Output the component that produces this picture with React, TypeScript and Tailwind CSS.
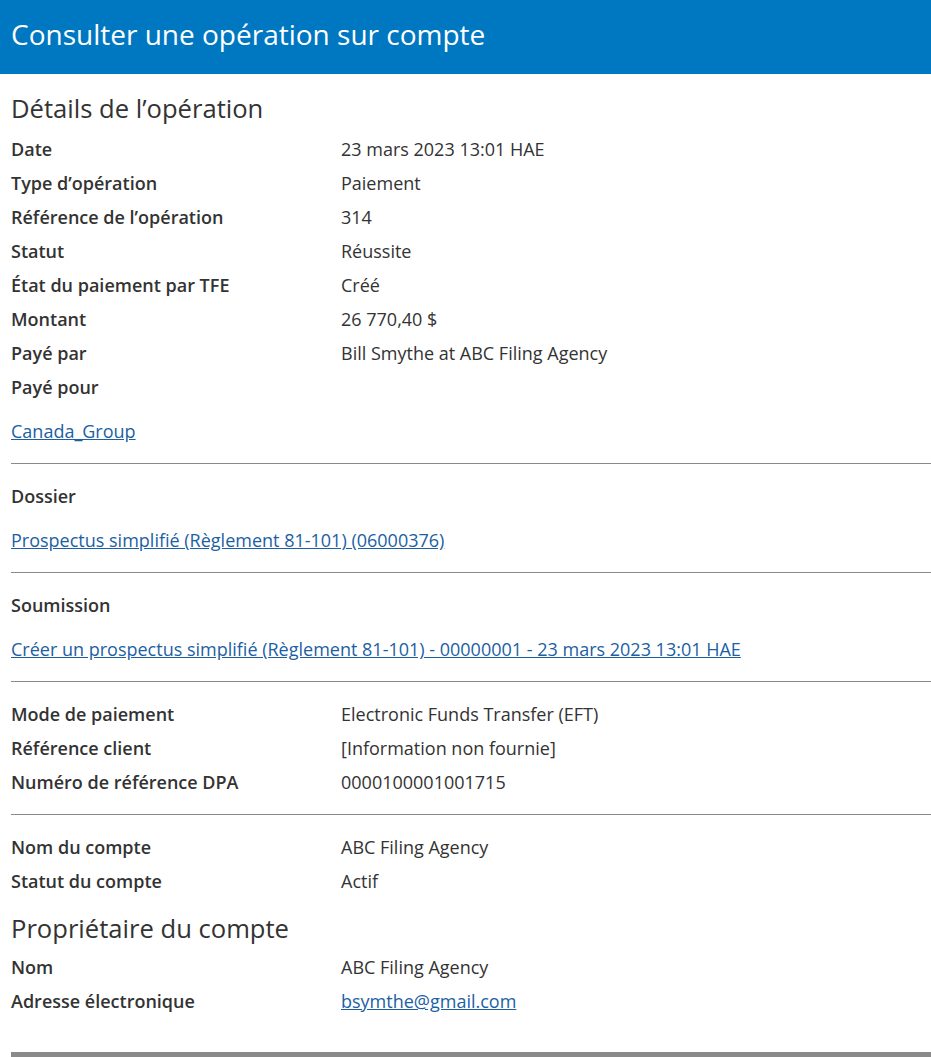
const font = { fontFamily: '"Open Sans", "Noto Sans", sans-serif' };

type Row = { label: string; value?: string; href?: boolean };

function Rows({ rows }: { rows: Row[] }) {
  return (
    <dl>
      {rows.map((r) => (
        <div key={r.label} className="flex py-[5px] leading-6">
          <dt className="w-[330px] shrink-0 font-semibold">{r.label}</dt>
          <dd>
            {r.href ? (
              <a href="#" className="text-[#1c5fa3] underline">
                {r.value}
              </a>
            ) : (
              r.value
            )}
          </dd>
        </div>
      ))}
    </dl>
  );
}

function LinkLine({ children }: { children: React.ReactNode }) {
  return (
    <p className="mt-[10px] py-[5px] leading-6">
      <a href="#" className="text-[#1c5fa3] underline">
        {children}
      </a>
    </p>
  );
}

function Rule() {
  return <hr className="my-[15px] border-0 border-t border-[#8a8a8a]" />;
}

export default function App() {
  return (
    <div className="min-h-screen bg-white text-[18px] text-[#333333]" style={font}>
      <header className="flex h-[74px] items-center bg-[#0077c1] px-[11px] pb-[6px]">
        <h1 className="text-[28px] leading-9 text-white">
          Consulter une opération sur compte
        </h1>
      </header>

      <main className="pl-[11px]">
        <h2 className="mt-[19px] mb-[7px] text-[25.6px] leading-8">Détails de l’opération</h2>
        <Rows
          rows={[
            { label: "Date", value: "23 mars 2023 13:01 HAE" },
            { label: "Type d’opération", value: "Paiement" },
            { label: "Référence de l’opération", value: "314" },
            { label: "Statut", value: "Réussite" },
            { label: "État du paiement par TFE", value: "Créé" },
            { label: "Montant", value: "26 770,40 $" },
            { label: "Payé par", value: "Bill Smythe at ABC Filing Agency" },
            { label: "Payé pour" },
          ]}
        />
        <LinkLine>Canada_Group</LinkLine>
        <Rule />

        <Rows rows={[{ label: "Dossier" }]} />
        <LinkLine>Prospectus simplifié (Règlement 81-101) (06000376)</LinkLine>
        <Rule />

        <Rows rows={[{ label: "Soumission" }]} />
        <LinkLine>
          Créer un prospectus simplifié (Règlement 81-101) - 00000001 - 23 mars 2023 13:01 HAE
        </LinkLine>
        <Rule />

        <Rows
          rows={[
            { label: "Mode de paiement", value: "Electronic Funds Transfer (EFT)" },
            { label: "Référence client", value: "[Information non fournie]" },
            { label: "Numéro de référence DPA", value: "0000100001001715" },
          ]}
        />
        <Rule />

        <Rows
          rows={[
            { label: "Nom du compte", value: "ABC Filing Agency" },
            { label: "Statut du compte", value: "Actif" },
          ]}
        />
        <h2 className="mt-[15px] mb-[5px] text-[25.6px] leading-8">Propriétaire du compte</h2>
        <Rows
          rows={[
            { label: "Nom", value: "ABC Filing Agency" },
            { label: "Adresse électronique", value: "bsymthe@gmail.com", href: true },
          ]}
        />
        <div className="mt-[34px] h-[5px] bg-[#8a8a8a]" />
      </main>
    </div>
  );
}
